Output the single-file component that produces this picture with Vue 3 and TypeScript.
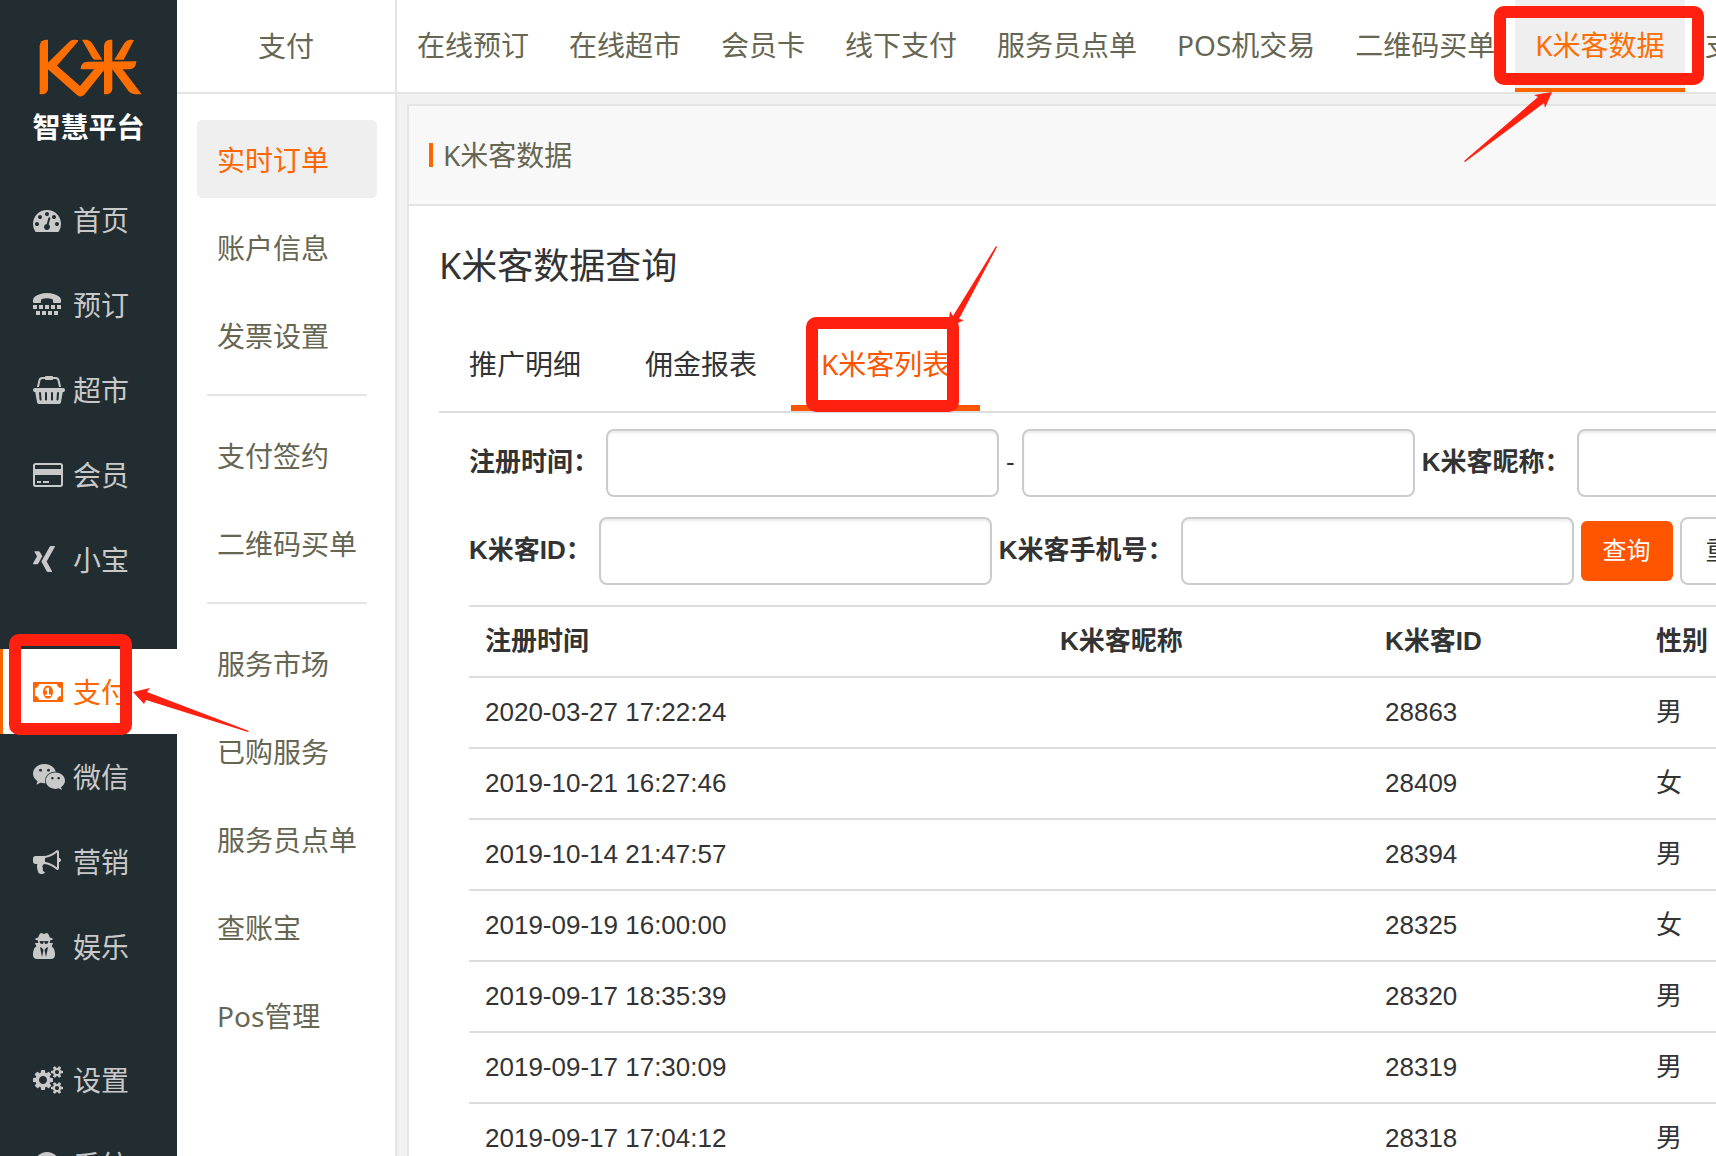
<script setup lang="ts">
import { ref } from 'vue'

interface Icon {
  box: string
  width: number
  path: string
}
interface NavItem {
  label: string
  icon: Icon
  active?: boolean
}
interface Guest {
  time: string
  name: string
  id: string
  sex: string
}

const icons: Record<string, Icon> = {
  gauge: {
    box: '0 0 1792 1792',
    width: 28,
    path: 'M384 1152q0-53-37.5-90.5t-90.5-37.5-90.5 37.5-37.5 90.5 37.5 90.5 90.5 37.5 90.5-37.5 37.5-90.5zm192-448q0-53-37.5-90.5t-90.5-37.5-90.5 37.5-37.5 90.5 37.5 90.5 90.5 37.5 90.5-37.5 37.5-90.5zm428 481l101-382q6-26-7.5-48.5t-38.5-29.5-48 6.5-30 39.5l-101 382q-60 5-107 43.5t-63 98.5q-20 77 20 146t117 89 146-20 89-117q16-60-6-117t-72-91zm660-33q0-53-37.5-90.5t-90.5-37.5-90.5 37.5-37.5 90.5 37.5 90.5 90.5 37.5 90.5-37.5 37.5-90.5zm-640-640q0-53-37.5-90.5t-90.5-37.5-90.5 37.5-37.5 90.5 37.5 90.5 90.5 37.5 90.5-37.5 37.5-90.5zm448 192q0-53-37.5-90.5t-90.5-37.5-90.5 37.5-37.5 90.5 37.5 90.5 90.5 37.5 90.5-37.5 37.5-90.5zm320 448q0 261-141 483-19 29-54 29h-1402q-35 0-54-29-141-221-141-483 0-182 71-348t191-286 286-191 348-71 348 71 286 191 191 286 71 348z',
  },
  tty: {
    box: '0 0 28 28',
    width: 28,
    path: 'M0 11V9Q0 7 2 5.500Q7 2 14 2T26 5.500Q28 7 28 9V11Q28 12 27 12H21Q20 12 20 11V8.500Q17 7.300 14 7.300T8 8.500V11Q8 12 7 12H1Q0 12 0 11zM0 14h4v4H0zM6 14h4v4H6zM12 14h4v4h-4zM18 14h4v4h-4zM24 14h4v4h-4zM3 20h4v4H3zM9 20h4v4H9zM15 20h4v4h-4zM21 20h4v4h-4z',
  },
  basket: {
    box: '0 0 2048 1792',
    width: 32,
    path: 'M1920 768q53 0 90.5 37.5t37.5 90.5-37.5 90.5-90.5 37.5h-15l-115 662q-8 46-44 76t-82 30h-1280q-46 0-82-30t-44-76l-115-662h-15q-53 0-90.5-37.5t-37.5-90.5 37.5-90.5 90.5-37.5h1792zm-1435 800q26-2 43.5-22.5t15.5-46.5l-32-416q-2-26-22.5-43.5t-46.5-15.5-43.5 22.5-15.5 46.5l32 416q2 25 20.5 42t43.5 17h5zm411-64v-416q0-26-19-45t-45-19-45 19-19 45v416q0 26 19 45t45 19 45-19 19-45zm384 0v-416q0-26-19-45t-45-19-45 19-19 45v416q0 26 19 45t45 19 45-19 19-45zm352 5l32-416q2-26-15.5-46.5t-43.5-22.5-46.5 15.5-22.5 43.5l-32 416q-2 26 15.5 46.5t43.5 22.5h5q25 0 43.5-17t20.5-42zm-1156-1217l-93 412h-132l101-441q19-88 89-143.5t160-55.5h167q0-26 19-45t45-19h384q26 0 45 19t19 45h167q90 0 160 55.5t89 143.5l101 441h-132l-93-412q-11-44-45.5-72t-79.5-28h-167q0 26-19 45t-45 19h-384q-26 0-45-19t-19-45h-167q-45 0-79.5 28t-45.5 72z',
  },
  card: {
    box: '0 0 1920 1792',
    width: 30,
    path: 'M1760 128q66 0 113 47t47 113v1216q0 66-47 113t-113 47h-1600q-66 0-113-47t-47-113v-1216q0-66 47-113t113-47h1600zm-1600 128q-13 0-22.5 9.5t-9.5 22.5v224h1664v-224q0-13-9.5-22.5t-22.5-9.5h-1600zm1600 1280q13 0 22.5-9.5t9.5-22.5v-608h-1664v608q0 13 9.5 22.5t22.5 9.5h1600zm-1504-128v-128h256v128h-256zm384 0v-128h384v128h-384z',
  },
  xing: {
    box: '192 0 1408 1792',
    width: 22,
    path: 'M789 659q-10 18-257 456-27 46-65 46h-239q-21 0-31-17t0-36l253-448q1 0 0-1l-161-279q-12-22-1-37 9-15 32-15h239q40 0 66 45zm806-642q11 16 0 37l-528 934v1l336 615q11 20 1 37-10 15-32 15h-239q-42 0-66-45l-339-622q18-32 531-942 25-45 64-45h241q22 0 31 15z',
  },
  money: {
    box: '0 0 1920 1792',
    width: 30,
    path: 'M768 1152h384v-96h-128v-448h-114l-148 137 77 80q42-37 55-57h2v288h-128v96zm512-256q0 70-21 142t-59.5 134-101.5 101-138 39-138-39-101.5-101-59.5-134-21-142 21-142 59.5-134 101.5-101 138-39 138 39 101.5 101 59.5 134 21 142zm512 256v-512q-106 0-181-75t-75-181h-1152q0 106-75 181t-181 75v512q106 0 181 75t75 181h1152q0-106 75-181t181-75zm128-832v1152q0 26-19 45t-45 19h-1792q-26 0-45-19t-19-45v-1152q0-26 19-45t45-19h1792q26 0 45 19t19 45z',
  },
  wechat: {
    box: '0 0 2048 1792',
    width: 32,
    path: 'M580 461q0-41-25-66t-66-25q-43 0-76 25.5t-33 65.5q0 39 33 64.5t76 25.5q41 0 66-24.5t25-65.5zm743 507q0-28-25.5-50t-65.5-22q-27 0-49.5 22.5t-22.5 49.5q0 28 22.5 50.5t49.5 22.5q40 0 65.5-22t25.5-51zm-236-507q0-41-24.5-66t-65.5-25q-43 0-76 25.5t-33 65.5q0 39 33 64.5t76 25.5q41 0 65.5-24.5t24.5-65.5zm635 507q0-28-26-50t-65-22q-27 0-49.5 22.5t-22.5 49.5q0 28 22.5 50.5t49.5 22.5q39 0 65-22t26-51zm-266-397q-31-4-70-4-169 0-311 77t-223.5 208.5-81.5 287.5q0 78 23 152-35 3-68 3-26 0-50-1.5t-55-6.5-44.5-7-54.5-10.5-50-10.5l-253 127 72-218q-290-203-290-490 0-169 97.5-311t264-223.5 363.5-81.5q176 0 332.5 66t262 182.5 136.5 260.5zm592 561q0 117-68.5 223.5t-185.5 193.5l55 181-199-109q-150 37-218 37-169 0-311-70.5t-223.5-191.5-81.5-264 81.5-264 223.5-191.5 311-70.5q161 0 303 70.5t227.5 192 85.5 263.5z',
  },
  bullhorn: {
    box: '0 0 1792 1792',
    width: 28,
    path: 'M1664 640q53 0 90.5 37.5t37.5 90.5-37.5 90.5-90.5 37.5v384q0 52-38 90t-90 38q-417-347-812-380-58 19-91 66t-31 100.5 40 92.5q-20 33-23 65.5t6 58 33.5 55 48 50 61.5 50.5q-29 58-111.5 83t-168.5 11.5-132-55.5q-7-23-29.5-87.5t-32-94.5-23-89-15-101 3.5-98.5 22-110.5h-122q-66 0-113-47t-47-113v-192q0-66 47-113t113-47h480q435 0 896-384 52 0 90 38t38 90v384zm-128 604v-954q-394 302-768 343v270q377 42 768 341z',
  },
  secret: {
    box: '192 0 1408 1792',
    width: 22,
    path: 'M768 1536l96-448-96-128-128-64zm256 0l128-640-128 64-96 128zm160-1010q-2-4-4-6-10-8-96-8-70 0-167 19-7 2-21 2t-21-2q-97-19-167-19-86 0-96 8-2 2-4 6 2 18 4 27 2 3 7.5 6.5t7.5 10.5q2 4 7.5 20.5t7 20.5 7.5 17 8.5 17 9 14 12 13.5 14 9.5 17.5 8 20.5 4 24.5 2q36 0 59-12.5t32.5-30 14.5-34.5 11.5-29.5 17.5-12.5h12q11 0 17.5 12.5t11.5 29.5 14.5 34.5 32.5 30 59 12.5q13 0 24.5-2t20.5-4 17.5-8 14-9.5 12-13.5 9-14 8.5-17 7.5-17 7-20.5 7.5-20.5q2-7 7.5-10.5t7.5-6.5q2-9 4-27zm416 879q0 121-73 190t-194 69h-874q-121 0-194-69t-73-190q0-61 4.5-118t19-125.5 37.5-123.5 63.5-103.5 93.5-74.5l-90-220h214q-22-64-22-128 0-12 2-32-194-40-194-96 0-57 210-99 17-62 51.5-134t70.5-114q32-37 76-37 30 0 84 31t84 31 84-31 84-31q44 0 76 37 36 42 70.5 114t51.5 134q210 42 210 99 0 56-194 96 7 81-20 160h214l-82 225q63 33 107.5 96.5t65.5 143.5 29 151.5 8 157.5z',
  },
  cogs: {
    box: '0 0 1920 1792',
    width: 30,
    path: 'M896 896q0-106-75-181t-181-75-181 75-75 181 75 181 181 75 181-75 75-181zm768 512q0-52-38-90t-90-38-90 38-38 90q0 53 37.5 90.5t90.5 37.5 90.5-37.5 37.5-90.5zm0-1024q0-52-38-90t-90-38-90 38-38 90q0 53 37.5 90.5t90.5 37.5 90.5-37.5 37.5-90.5zm-384 421v185q0 10-7 19.5t-16 10.5l-155 24q-11 35-32 76 34 48 90 115 7 11 7 20 0 12-7 19-23 30-82.5 89.5t-78.5 59.5q-11 0-21-7l-115-90q-37 19-77 31-11 108-23 155-7 24-30 24h-186q-11 0-20-7.5t-10-17.5l-23-153q-34-10-75-31l-118 89q-7 7-20 7-11 0-21-8-144-133-144-160 0-9 7-19 10-14 41-53t47-61q-23-44-35-82l-152-24q-10-1-17-9.5t-7-19.5v-185q0-10 7-19.5t16-10.5l155-24q11-35 32-76-34-48-90-115-7-11-7-20 0-12 7-20 22-30 82-89t79-59q11 0 21 7l115 90q34-18 77-32 11-108 23-154 7-24 30-24h186q11 0 20 7.5t10 17.5l23 153q34 10 75 31l118-89q8-7 20-7 11 0 21 8 144 133 144 160 0 8-7 19-12 16-42 54t-45 60q23 48 34 82l152 23q10 2 17 10.5t7 19.5zm640 533v140q0 16-149 31-12 27-30 52 51 113 51 138 0 4-4 7-122 71-124 71-8 0-46-47t-52-68q-20 2-30 2t-30-2q-14 21-52 68t-46 47q-2 0-124-71-4-3-4-7 0-25 51-138-18-25-30-52-149-15-149-31v-140q0-16 149-31 13-29 30-52-51-113-51-138 0-4 4-7 4-2 35-20t59-34 30-16q8 0 46 46.5t52 67.5q20-2 30-2t30 2q51-71 92-112l6-2q4 0 124 70 4 3 4 7 0 25-51 138 17 23 30 52 149 15 149 31zm0-1024v140q0 16-149 31-12 27-30 52 51 113 51 138 0 4-4 7-122 71-124 71-8 0-46-47t-52-68q-20 2-30 2t-30-2q-14 21-52 68t-46 47q-2 0-124-71-4-3-4-7 0-25 51-138-18-25-30-52-149-15-149-31v-140q0-16 149-31 13-29 30-52-51-113-51-138 0-4 4-7 4-2 35-20t59-34 30-16q8 0 46 46.5t52 67.5q20-2 30-2t30 2q51-71 92-112l6-2q4 0 124 70 4 3 4 7 0 25-51 138 17 23 30 52 149 15 149 31z',
  },
  disc: {
    box: '0 0 28 28',
    width: 28,
    path: 'M14 1a13 13 0 1 0 0 26a13 13 0 1 0 0-26z',
  },
}

const navGroups: NavItem[][] = [
  [
    { label: '首页', icon: icons.gauge },
    { label: '预订', icon: icons.tty },
    { label: '超市', icon: icons.basket },
    { label: '会员', icon: icons.card },
    { label: '小宝', icon: icons.xing },
  ],
  [
    { label: '支付', icon: icons.money, active: true },
    { label: '微信', icon: icons.wechat },
    { label: '营销', icon: icons.bullhorn },
    { label: '娱乐', icon: icons.secret },
  ],
  [
    { label: '设置', icon: icons.cogs },
    { label: '系统', icon: icons.disc },
  ],
]

const menuGroups: string[][] = [
  ['实时订单', '账户信息', '发票设置'],
  ['支付签约', '二维码买单'],
  ['服务市场', '已购服务', '服务员点单', '查账宝', 'Pos管理'],
]
const currentMenu = ref('实时订单')

const topTabs = ['在线预订', '在线超市', '会员卡', '线下支付', '服务员点单', 'POS机交易', '二维码买单', 'K米客数据', '支付对账']
const currentTop = ref('K米客数据')

const subTabs = ['推广明细', '佣金报表', 'K米客列表']
const currentSub = ref('K米客列表')

const query = ref({ from: '', to: '', name: '', id: '', phone: '' })
function reset() {
  query.value = { from: '', to: '', name: '', id: '', phone: '' }
}

const guests: Guest[] = [
  { time: '2020-03-27 17:22:24', name: '', id: '28863', sex: '男' },
  { time: '2019-10-21 16:27:46', name: '', id: '28409', sex: '女' },
  { time: '2019-10-14 21:47:57', name: '', id: '28394', sex: '男' },
  { time: '2019-09-19 16:00:00', name: '', id: '28325', sex: '女' },
  { time: '2019-09-17 18:35:39', name: '', id: '28320', sex: '男' },
  { time: '2019-09-17 17:30:09', name: '', id: '28319', sex: '男' },
  { time: '2019-09-17 17:04:12', name: '', id: '28318', sex: '男' },
]
</script>

<template>
  <div class="shell">
    <aside class="side">
      <div class="brand">
        <svg class="logo" viewBox="115 115 315 180" aria-label="K米" role="img">
          <path d="M120 284V138Q122 120 140 120H145V268Q143 282 130 284Z" />
          <path d="M144 190L208 127Q214 120 224 120L234 121Q238 122 233 128L172 198L241 259L284 208H316L254 285Q243 295 232 286L144 208Z" />
          <path d="M243 209Q243 186 264 186L410 185Q408 209 390 209Z" />
          <path d="M313 284V138Q315 121 331 120H338V268Q336 283 322 284Z" />
          <path d="M247 120H262Q272 122 277 130L308 180H284Q279 177 276 171Z" />
          <path d="M403 121L372 180H344L373 132Q380 121 390 120Z" />
          <path d="M337 207H368L426 284H408Q395 283 388 276Z" />
        </svg>
        <span class="slogan">智慧平台</span>
      </div>
      <nav>
        <ul v-for="(group, g) in navGroups" :key="g" class="side-group">
          <li v-for="item in group" :key="item.label">
            <a href="#" class="side-item" :class="{ active: item.active }">
              <span class="side-icon">
                <svg :viewBox="item.icon.box" :width="item.icon.width" height="28" aria-hidden="true">
                  <path :d="item.icon.path" fill="currentColor" />
                </svg>
              </span>
              <span>{{ item.label }}</span>
            </a>
          </li>
        </ul>
      </nav>
    </aside>

    <section class="menu">
      <h2 class="menu-title">支付</h2>
      <nav class="menu-body">
        <ul v-for="(group, g) in menuGroups" :key="g" class="menu-group">
          <li v-for="label in group" :key="label">
            <a href="#" class="menu-item" :class="{ active: label === currentMenu }" @click.prevent="currentMenu = label">{{ label }}</a>
          </li>
        </ul>
      </nav>
    </section>

    <main class="main">
      <nav class="top">
        <a
          v-for="label in topTabs"
          :key="label"
          href="#"
          class="top-item"
          :class="{ active: label === currentTop }"
          @click.prevent="currentTop = label"
        >{{ label }}</a>
      </nav>

      <div class="card">
        <header class="card-head"><span class="card-name">K米客数据</span></header>
        <div class="card-body">
          <h1 class="title">K米客数据查询</h1>
          <div class="tabs">
            <a
              v-for="label in subTabs"
              :key="label"
              href="#"
              class="tab"
              :class="{ active: label === currentSub }"
              @click.prevent="currentSub = label"
            >{{ label }}</a>
          </div>

          <div class="panel">
            <form @submit.prevent>
              <div class="row">
                <label for="from">注册时间：</label>
                <input id="from" v-model="query.from" type="text">
                <span>-</span>
                <input id="to" v-model="query.to" type="text" aria-label="注册时间">
                <label for="name">K米客昵称：</label>
                <input id="name" v-model="query.name" type="text">
              </div>
              <div class="row">
                <label for="gid">K米客ID：</label>
                <input id="gid" v-model="query.id" type="text">
                <label for="phone">K米客手机号：</label>
                <input id="phone" v-model="query.phone" type="text">
                <button class="btn primary" type="submit">查询</button>
                <button class="btn" type="button" @click="reset">重置</button>
              </div>
            </form>

            <table>
              <colgroup>
                <col class="c-time"><col class="c-name"><col class="c-id"><col>
              </colgroup>
              <thead>
                <tr><th>注册时间</th><th>K米客昵称</th><th>K米客ID</th><th>性别</th></tr>
              </thead>
              <tbody>
                <tr v-for="guest in guests" :key="guest.id">
                  <td>{{ guest.time }}</td>
                  <td>{{ guest.name }}</td>
                  <td>{{ guest.id }}</td>
                  <td>{{ guest.sex }}</td>
                </tr>
              </tbody>
            </table>
          </div>
        </div>
      </div>
    </main>

    <!-- Red guide marks laid over the page -->
    <svg class="marks" aria-hidden="true">
      <rect x="15" y="640" width="111" height="89" rx="4" />
      <rect x="812" y="323" width="141" height="83" rx="4" />
      <rect x="1500" y="12" width="198" height="67" rx="4" />
      <path d="M133 692L150 688L147 692L249 731L248 732L146 700L144 704Z" />
      <path d="M948 328L950 311L953 316L996 246L997 247L959 319L964 320Z" />
      <path d="M1552 92L1534 95L1538 97L1464 161L1465 162L1544 103L1545 108Z" />
    </svg>
  </div>
</template>

<style>
body {
  margin: 0;
}
</style>

<style scoped>
.shell {
  position: relative;
  display: flex;
  height: 100vh;
  overflow: hidden;
  background: #f1f1f1;
  color: #666652;
  font-family: "Noto Sans", "Noto Sans CJK SC", sans-serif;
  font-size: 28px;
  line-height: 40px;
  white-space: nowrap;
}
* {
  box-sizing: border-box;
}
ul {
  margin: 0;
  padding: 0;
  list-style: none;
}
a {
  color: inherit;
  text-decoration: none;
}

/* dark side bar */
.side {
  flex: none;
  width: 177px;
  background: #222d32;
  color: #c9c9c9;
}
.brand {
  display: flex;
  flex-direction: column;
  align-items: center;
  height: 177px;
  padding-top: 38px;
}
.logo {
  width: 105px;
  height: 60px;
  margin-left: 4px;
  fill: #ff6e00;
}
.slogan {
  margin-top: 9px;
  color: #fff;
  font-size: 28px;
  font-weight: 700;
}
.side-group + .side-group {
  margin-top: 47px;
}
.side-group:last-child {
  margin-top: 48px;
}
.side-item {
  display: flex;
  align-items: center;
  height: 85px;
  padding-left: 33px;
}
.side-item.active {
  padding-left: 30px;
  border-left: 3px solid #ff6600;
  background: #fff;
  color: #ff6600;
}
.side-icon {
  display: flex;
  width: 40px;
}

/* light menu column */
.menu {
  flex: none;
  width: 220px;
  border-right: 2px solid #e4e4e4;
  background: #fff;
}
.menu-title {
  height: 94px;
  margin: 0;
  border-bottom: 2px solid #e4e4e4;
  font-size: 28px;
  font-weight: 400;
  line-height: 92px;
  text-align: center;
}
.menu-body {
  padding: 26px 18px 0 20px;
}
.menu-group {
  display: flex;
  flex-direction: column;
  gap: 10px;
}
.menu-group + .menu-group {
  position: relative;
  margin-top: 20px;
  padding-top: 22px;
}
.menu-group + .menu-group::before {
  content: "";
  position: absolute;
  top: 0;
  right: 10px;
  left: 10px;
  height: 2px;
  background: #e4e4e4;
}
.menu-item {
  display: block;
  height: 78px;
  padding-left: 20px;
  border-radius: 5px;
  line-height: 80px;
}
.menu-item.active {
  background: #efefef;
  color: #ff6600;
}

/* top tabs */
.main {
  flex: 1;
  min-width: 0;
  overflow: hidden;
}
.top {
  display: flex;
  height: 94px;
  border-bottom: 2px solid #e4e4e4;
  background: #fff;
}
.top-item {
  flex: none;
  height: 92px;
  padding: 0 20px;
  line-height: 90px;
}
.top-item.active {
  border-bottom: 4px solid #ff6600;
  background: #efefef;
  color: #ff6e00;
}

/* content card */
.card {
  width: max-content;
  min-width: 100%;
  margin: 10px;
  border: 2px solid #e4e4e4;
  background: #fff;
}
.card-head {
  display: flex;
  align-items: center;
  height: 100px;
  padding-left: 20px;
  border-bottom: 2px solid #e4e4e4;
  background: #f8f8f8;
}
.card-name {
  padding-left: 10px;
  border-left: 4px solid #ff6600;
  line-height: 24px;
}
.card-body {
  padding: 40px 30px 0;
  color: #333;
}
.title {
  margin: 0;
  font-size: 36px;
  font-weight: 400;
  line-height: 40px;
}
.tabs {
  display: flex;
  gap: 4px;
  margin-top: 29px;
  border-bottom: 2px solid #ddd;
}
.tab {
  height: 96px;
  padding: 0 30px;
  line-height: 98px;
}
.tab.active {
  border-bottom: 6px solid #ff5500;
  color: #ff5500;
}
.panel {
  padding: 16px 30px 0;
  font-family: "Liberation Sans", "Noto Sans CJK SC", sans-serif;
  font-size: 26px;
}
.row {
  display: flex;
  align-items: center;
  gap: 7px;
  margin-bottom: 20px;
}
.row label,
.row span {
  padding-bottom: 2px;
}
.row label {
  font-weight: 700;
}
.row input {
  width: 393px;
  height: 68px;
  padding: 0 20px;
  border: 2px solid #ccc;
  border-radius: 8px;
  box-shadow: inset 0 2px 2px rgba(0, 0, 0, 0.075);
  color: #333;
  font: inherit;
}
.btn {
  height: 68px;
  padding: 0 24px;
  border: 2px solid #ccc;
  border-radius: 8px;
  background: #fff;
  color: #333;
  font: inherit;
}
.btn.primary {
  height: 60px;
  padding: 0 22px;
  border: 0;
  border-radius: 6px;
  background: #ff5500;
  color: #fff;
  font-size: 24px;
}

table {
  width: 100%;
  min-width: 1400px;
  border-collapse: separate;
  border-spacing: 0;
  table-layout: fixed;
}
.c-time {
  width: 575px;
}
.c-name {
  width: 325px;
}
.c-id {
  width: 271px;
}
th,
td {
  height: 71px;
  padding: 0 16px 2px;
  border-top: 2px solid #ddd;
  text-align: left;
}

/* guide marks */
.marks {
  position: absolute;
  top: 0;
  left: 0;
  width: 100%;
  height: 100%;
  pointer-events: none;
}
.marks rect {
  fill: none;
  stroke: #ff2010;
  stroke-width: 12px;
}
.marks path {
  fill: #ff2010;
}
</style>
